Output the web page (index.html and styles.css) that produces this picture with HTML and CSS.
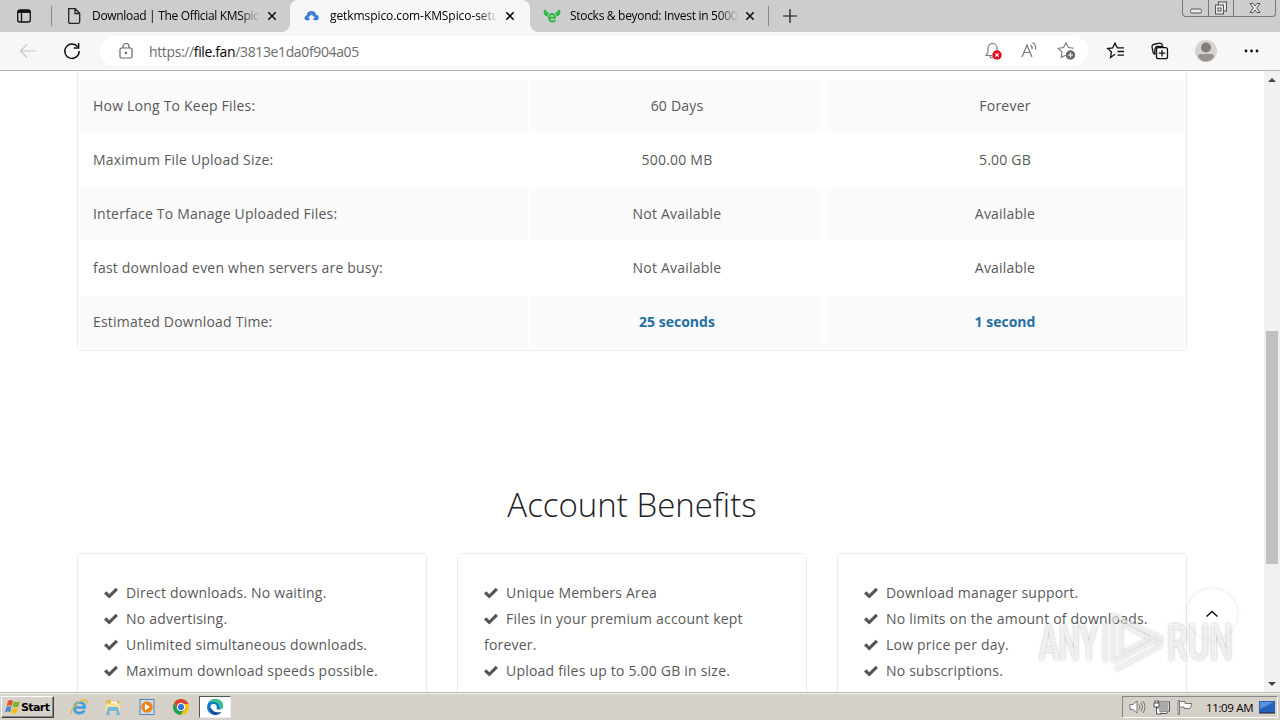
FILE: index.html
```html
<!DOCTYPE html>
<html lang="en">
  <head>
    <meta charset="UTF-8" />
    <meta name="viewport" content="width=device-width, initial-scale=1.0" />
    <title>getkmspico.com-KMSpico-setup</title>
    <link rel="stylesheet" href="styles.css">
  </head>
  <body>
    <div class="tab-bar">
      <div class="tab-actions">
        <svg width="16" height="16" viewBox="0 0 16 16" fill="none" stroke="#111" stroke-width="1.3"><rect x="1.7" y="2" width="12.6" height="12" rx="2"/><path d="M2 4h12M5.5 5v9" /><path d="M2 3.4h12" stroke-width="2.6"/></svg>
      </div>
      <div class="tab">
        <svg class="favicon" width="18" height="18" viewBox="0 0 18 18" fill="none" stroke="#222" stroke-width="1.3"><path d="M3.7 1.7h6.5l4.5 4.5v8.6q0 1.5-1.5 1.5H5.2q-1.5 0-1.5-1.5zM10 2v4.5h4.5"/></svg>
        <span class="tab-title title-download">Download | The Official KMSpic</span>
        <svg class="close" width="10" height="10" viewBox="0 0 10 10"><path d="M1.3 1.3l7.4 7.4M8.7 1.3L1.3 8.7"/></svg>
      </div>
      <div class="tab active">
        <svg class="favicon" width="18" height="18" viewBox="0 0 18 18"><path fill="#3e7fd6" d="M6.500 13.300H3.700C2 13.300 1.500 12 1.500 11Q1.500 8.800 3.700 8.300Q4.200 4 8.500 4Q12.300 4 13 7.700Q15.700 8 15.700 10.800Q15.700 13.300 13.200 13.300H10.500V11h1.700L8.500 7.500 4.800 11h1.700z"/></svg>
        <span class="tab-title title-file">getkmspico.com-KMSpico-setu</span>
        <svg class="close" width="10" height="10" viewBox="0 0 10 10"><path d="M1.3 1.3l7.4 7.4M8.7 1.3L1.3 8.7"/></svg>
      </div>
      <div class="tab">
        <svg class="favicon" width="18" height="18" viewBox="0 0 18 18"><path fill="#2fb845" d="M2.500 2Q2 4.500 5.500 5.500L4.500 9.500Q-.5 8 1 3.500zM15.500 2Q16 4.500 12.500 5.500L13.500 9.500Q18.500 8 17 3.500z"/><path fill="none" stroke="#2fb845" stroke-width="2" d="M6 10.800h6Q12 7 9 7T6 11Q6.200 14.500 9.300 14.500 11.200 14.500 12.300 13.300"/></svg>
        <span class="tab-title title-stocks">Stocks &amp; beyond: Invest in 5000</span>
        <svg class="close" width="10" height="10" viewBox="0 0 10 10"><path d="M1.3 1.3l7.4 7.4M8.7 1.3L1.3 8.7"/></svg>
      </div>
      <div class="new-tab">
        <svg width="14" height="14" viewBox="0 0 14 14"><path d="M0 7h14M7 0v14" stroke="#111" stroke-width="1.2"/></svg>
      </div>
      <div class="window-buttons">
        <span class="win-button"><svg width="14" height="14" viewBox="0 0 14 14"><rect x="1.5" y="8" width="11" height="4" rx="1.5"/></svg></span>
        <span class="win-button"><svg width="14" height="14" viewBox="0 0 14 14"><rect x="4.5" y="1" width="8" height="9"/><rect x="1.5" y="4" width="8" height="9"/><rect x="4" y="7" width="3" height="3"/></svg></span>
        <span class="win-button wide"><svg width="14" height="14" viewBox="0 0 14 14"><path d="M2 2.500h3l2 2.500 2-2.500h3L8.700 7l3.300 4.500H9L7 9l-2 2.500H2L5.300 7z"/></svg></span>
      </div>
    </div>

    <div class="toolbar">
      <svg class="back" width="18" height="16" viewBox="0 0 18 16"><path d="M17 8H2M8 1.500L1.500 8 8 14.500" fill="none" stroke="#c9c9c9" stroke-width="1.2"/></svg>
      <svg class="reload" width="18" height="18" viewBox="0 0 18 18" fill="none" stroke="#111" stroke-width="1.4"><path d="M14.700 4.800A7.200 7.200 0 1 0 16.200 9M15.700 1v5h-5"/></svg>
      <div class="address">
        <svg class="lock" width="16" height="18" viewBox="0 0 16 18" fill="none" stroke="#666" stroke-width="1.2"><rect x="2" y="6" width="12" height="10" rx="1.5"/><path d="M5 6V4.500a3 3 0 0 1 6 0V6"/><circle cx="8" cy="11" r=".6" fill="#666"/></svg>
        <span class="url">https://<b>file.fan</b>/3813e1da0f904a05</span>
        <div class="address-icons">
          <svg width="20" height="20" viewBox="0 0 20 20"><path d="M9 14.500H3L5 11V7a4.500 4.500 0 0 1 9 0v3M7 15q1 3 3 1" fill="none" stroke="#777" stroke-width="1.1"/><circle cx="14" cy="14" r="4.700" fill="#e00b1c"/><path d="M12.300 12.300l3.400 3.400M15.700 12.300l-3.400 3.400" stroke="#fff" stroke-width="1.2"/></svg>
          <svg width="20" height="20" viewBox="0 0 20 20" fill="none" stroke="#777" stroke-width="1.2"><path d="M2 16L7 4 12 16M4 11.500h6M10.500 4q2 1.500 1.500 4M12.500 1.500q4 2.500 3 7"/></svg>
          <svg width="20" height="20" viewBox="0 0 20 20"><path d="M8.500 14.200L4.200 16.300 5 11 1.300 7.300l5.200-.8L9 2l2.500 4.500 5.200.8" fill="none" stroke="#777" stroke-width="1.1"/><circle cx="13.500" cy="14" r="4.700" fill="#666"/><path d="M13.500 11.500v5M11 14h5" stroke="#fff"/></svg>
        </div>
      </div>
      <div class="toolbar-icons">
        <svg width="20" height="20" viewBox="0 0 20 20" fill="none" stroke="#111" stroke-width="1.3"><path d="M9 13.300L4.500 16.500l1-5.500-3.800-3.500 5-.7L9 2.200l2.300 4.600H18M11.500 10.500H18M11.500 14.200H18"/></svg>
        <svg width="20" height="20" viewBox="0 0 20 20" fill="none" stroke="#111" stroke-width="1.3"><path d="M5 13.500Q3.300 13 3 11L2 6Q1.700 4 3.500 3.500L9.500 2.200Q12 2 12.500 4.300M5 13.500Q4 5.500 7.500 5.500h6"/><rect x="6.500" y="6.700" width="11" height="11" rx="2" fill="#f7f7f7"/><path d="M12 9v6.500M8.800 12.200h6.500"/></svg>
        <svg class="avatar" width="22" height="22" viewBox="0 0 22 22"><circle cx="11" cy="11" r="11" fill="#d5d2cf"/><circle cx="11" cy="7.500" r="5" fill="#827d79"/><path d="M3 16.500q0-2.500 3-2.500h10q3 0 3 2.500-2.500 5-8 5t-8-5z" fill="#98938f"/></svg>
        <svg width="20" height="20" viewBox="0 0 20 20" fill="#111"><circle cx="5" cy="10" r="1.400"/><circle cx="10.500" cy="10" r="1.400"/><circle cx="16" cy="10" r="1.400"/></svg>
      </div>
    </div>

    <div class="viewport">
      <div class="page">
        <div class="compare">
          <table>
            <tr><td>How Long To Keep Files:</td><td>60 Days</td><td>Forever</td></tr>
            <tr><td>Maximum File Upload Size:</td><td>500.00 MB</td><td>5.00 GB</td></tr>
            <tr><td>Interface To Manage Uploaded Files:</td><td>Not Available</td><td>Available</td></tr>
            <tr><td>fast download even when servers are busy:</td><td>Not Available</td><td>Available</td></tr>
            <tr><td>Estimated Download Time:</td><td><strong>25 seconds</strong></td><td><strong>1 second</strong></td></tr>
          </table>
        </div>

        <h2>Account Benefits</h2>

        <div class="benefits">
          <ul class="card">
            <li><svg class="check" viewBox="0 0 14 12"><path d="M0 6.500L2.300 4.200 5.300 7.200 11.700.8 14 3.100 5.300 11.600z"/></svg>Direct downloads. No waiting.</li>
            <li><svg class="check" viewBox="0 0 14 12"><path d="M0 6.500L2.300 4.200 5.300 7.200 11.700.8 14 3.100 5.300 11.600z"/></svg>No advertising.</li>
            <li><svg class="check" viewBox="0 0 14 12"><path d="M0 6.500L2.300 4.200 5.300 7.200 11.700.8 14 3.100 5.300 11.600z"/></svg>Unlimited simultaneous downloads.</li>
            <li><svg class="check" viewBox="0 0 14 12"><path d="M0 6.500L2.300 4.200 5.300 7.200 11.700.8 14 3.100 5.300 11.600z"/></svg>Maximum download speeds possible.</li>
          </ul>
          <ul class="card">
            <li><svg class="check" viewBox="0 0 14 12"><path d="M0 6.500L2.300 4.200 5.300 7.200 11.700.8 14 3.100 5.300 11.600z"/></svg>Unique Members Area</li>
            <li><svg class="check" viewBox="0 0 14 12"><path d="M0 6.500L2.300 4.200 5.300 7.200 11.700.8 14 3.100 5.300 11.600z"/></svg>Files in your premium account kept forever.</li>
            <li><svg class="check" viewBox="0 0 14 12"><path d="M0 6.500L2.300 4.200 5.300 7.200 11.700.8 14 3.100 5.300 11.600z"/></svg>Upload files up to 5.00 GB in size.</li>
          </ul>
          <ul class="card">
            <li><svg class="check" viewBox="0 0 14 12"><path d="M0 6.500L2.300 4.200 5.300 7.200 11.700.8 14 3.100 5.300 11.600z"/></svg>Download manager support.</li>
            <li><svg class="check" viewBox="0 0 14 12"><path d="M0 6.500L2.300 4.200 5.300 7.200 11.700.8 14 3.100 5.300 11.600z"/></svg>No limits on the amount of downloads.</li>
            <li><svg class="check" viewBox="0 0 14 12"><path d="M0 6.500L2.300 4.200 5.300 7.200 11.700.8 14 3.100 5.300 11.600z"/></svg>Low price per day.</li>
            <li><svg class="check" viewBox="0 0 14 12"><path d="M0 6.500L2.300 4.200 5.300 7.200 11.700.8 14 3.100 5.300 11.600z"/></svg>No subscriptions.</li>
          </ul>
        </div>

        <div class="to-top"><svg width="14" height="8" viewBox="0 0 14 8"><path d="M1.500 6.500L7 1.500l5.500 5" fill="none" stroke="#111" stroke-width="1.5"/></svg></div>
      </div>
      <div class="scrollbar">
        <span class="arrow up"></span>
        <span class="thumb"></span>
        <span class="arrow down"></span>
      </div>
    </div>

    <svg class="watermark" width="210" height="76" viewBox="0 0 210 76">
      <g fill="#fff" fill-opacity=".7">
        <text x="8" y="54" textLength="59" lengthAdjust="spacingAndGlyphs">ANY</text>
        <text x="136" y="54" textLength="66" lengthAdjust="spacingAndGlyphs">RUN</text>
      </g>
      <path d="M74 17v39M82 55V9l49 24-4 4L90 17v31l37-20M82 56l46-24M84 64l47-25" fill="none" stroke="#fff" stroke-opacity=".6" stroke-width="3.5" stroke-linejoin="round"/>
    </svg>

    <div class="taskbar">
      <div class="start">
        <svg width="17" height="16" viewBox="0 0 17 16"><path fill="#e3532b" d="M4 2q3-2 5 0L7.700 7q-2-1.500-5 0z"/><path fill="#77b52c" d="M10 2.500q3 1.500 6 0L14.500 7.500q-3 1.500-6 0z"/><path fill="#438bd3" d="M2.400 8q3-1.500 5 0L6 13.200q-2-1.500-5 0z"/><path fill="#f6bd22" d="M8.200 8.700q3 1.500 6 0L12.700 14q-3 1.500-6 0z"/></svg>
        <span>Start</span>
      </div>
      <div class="launch">
        <svg width="18" height="18" viewBox="0 0 18 18" fill="none"><path d="M4.500 9.500h10Q14.500 4.500 9.500 4.500T4.500 10T10 15Q13 15 14.300 12.500" stroke="#3ba0df" stroke-width="2.7"/><path d="M2 16Q-.5 13 6 6.500T16.500 2.500Q17.500 4 16 6.500" stroke="#e8b832" stroke-width="1.2"/></svg>
        <svg width="18" height="18" viewBox="0 0 18 18"><path fill="#e4b94e" d="M2 2h5l1 1h8v10H2z"/><path fill="#f8e29a" d="M2 5.500h14v8H2z"/><path fill="#fff" d="M7 3.500h6v2H7z"/><path fill="#6db8dc" d="M4 9h10l2 8h-3.500v-4h-7v4H2z"/></svg>
        <svg width="18" height="18" viewBox="0 0 18 18"><rect x="2" y="1.500" width="14" height="15" fill="#c9def0" stroke="#5682ad"/><circle cx="9" cy="9" r="5.800" fill="#f28419"/><path d="M7 5.800v6.400L12 9z" fill="#fff"/></svg>
        <svg width="18" height="18" viewBox="0 0 18 18"><circle cx="9" cy="9" r="8" fill="#f4c20d"/><path fill="#db4437" d="M2 5a8 8 0 0 1 14.400 1H9L5.500 11z"/><path fill="#20a05a" d="M2 5a8 8 0 0 0 6.500 12l4-6-6.500 1z"/><circle cx="9" cy="9" r="4" fill="#fff"/><circle cx="9" cy="9" r="3.100" fill="#3474df"/></svg>
        <div class="running"><svg width="18" height="18" viewBox="0 0 18 18"><path fill="#1676c9" d="M1 8.500Q2 1 9.500 1 17 1.500 17 8q0 3.500-4 3.500-3 0-2.300-1.500Q11 6 7.500 6t-3 4q.5 6 9.500 4.500Q11.500 17 8.500 17 1 16 1 8.500z"/><path fill="#3ac38a" d="M4 3Q7 .5 11 1.200 17 2.500 17 8q0 3-3.500 3.500Q14 5 9 4 6 3.300 3 5z"/><path fill="#144a96" d="M4.500 9Q2.500 16 10 17q4-.5 5.500-3Q7 16 4.500 9z"/></svg></div>
      </div>
      <div class="tray">
        <svg width="18" height="18" viewBox="0 0 18 18" fill="#fff" stroke="#777"><path d="M2 6.500h3L9 3v12l-4-3.500H2z"/><path fill="none" d="M11 6.500q1.800 2.500 0 5M13 4.500q3 4.500 0 9M15 3q4 6 0 12"/></svg>
        <svg width="18" height="18" viewBox="0 0 18 18" stroke="#555"><rect x="6" y="4.500" width="11" height="8" fill="#aaa" stroke="#fff"/><rect x="5.500" y="4" width="12" height="9" fill="none"/><path fill="#fff" d="M2 5h5v4H2zM3 2v3M6 2v3M4.500 9v7H9M8 15.500h7v-2"/></svg>
        <svg width="18" height="18" viewBox="0 0 18 18" fill="#fff" stroke="#777"><path d="M2 2.500h1.500v14H2z"/><path d="M3.500 3.500H9v2h7l-2 5H8V9H3.500z"/></svg>
        <span class="clock">11:09 AM</span>
        <svg class="desktop" width="16" height="14" viewBox="0 0 16 14"><rect width="16" height="12" y="1" fill="#2462ba"/><path fill="#5c92da" d="M1 2h14L1 9z"/><path d="M0 13h16" stroke="#222"/></svg>
      </div>
    </div>
  </body>
</html>
```

FILE: styles.css
```css
* {
  box-sizing: border-box;
}

body {
  margin: 0;
  width: 1280px;
  height: 720px;
  overflow: hidden;
  display: flex;
  flex-direction: column;
  position: relative;
  font-family: "Open Sans", sans-serif;
  background: #fff;
}

svg {
  flex: none;
  display: block;
}

/* tabs */
.tab-bar {
  height: 32px;
  flex: none;
  display: flex;
  align-items: flex-start;
  background: #cdcdcd;
}

.tab-actions {
  width: 52px;
  height: 20px;
  margin-top: 6px;
  padding: 2px 0 0 16px;
  border-right: 1px solid #888;
}

.tab {
  position: relative;
  width: 238px;
  height: 32px;
  padding: 0 13px;
  display: flex;
  align-items: center;
}

.tab.active {
  width: 240px;
  background: #f7f7f7;
  border-radius: 8px 8px 0 0;
}

.tab.active::before,
.tab.active::after {
  content: "";
  position: absolute;
  bottom: 0;
  width: 8px;
  height: 8px;
}

.tab.active::before {
  left: -8px;
  background: radial-gradient(circle at 0 0, #cdcdcd 7.5px, #f7f7f7 8px);
}

.tab.active::after {
  right: -8px;
  background: radial-gradient(circle at 100% 0, #cdcdcd 7.5px, #f7f7f7 8px);
}

.tab-title {
  width: 168px;
  margin-left: 9px;
  white-space: nowrap;
  font-size: 12px;
  line-height: 18px;
  color: #000;
  -webkit-mask-image: linear-gradient(to right, #000 148px, transparent 168px);
  mask-image: linear-gradient(to right, #000 148px, transparent 168px);
}

.title-download {
  letter-spacing: -0.32px;
}

.title-file {
  letter-spacing: -0.08px;
}

.title-stocks {
  letter-spacing: -0.3px;
}

.close {
  margin-left: 7px;
  fill: none;
  stroke: #111;
  stroke-width: 1.6;
}

.new-tab {
  height: 20px;
  margin-top: 6px;
  padding: 3px 0 0 14px;
  border-left: 1px solid #888;
}

.window-buttons {
  margin: 0 4px 0 auto;
  display: flex;
  height: 17px;
  border: 1px solid #777;
  border-top: 0;
  border-radius: 0 0 4px 4px;
}

.win-button {
  width: 25px;
  display: flex;
  justify-content: center;
  align-items: center;
  fill: #e9e9e9;
  stroke: #555;
}

.win-button + .win-button {
  border-left: 1px solid #777;
}

.win-button.wide {
  width: 42px;
}

/* toolbar */
.toolbar {
  height: 39px;
  flex: none;
  display: flex;
  align-items: center;
  background: #f7f7f7;
  border-bottom: 1px solid #b5b5b5;
}

.back {
  margin-left: 19px;
}

.reload {
  margin-left: 26px;
}

.address {
  width: 988px;
  height: 30px;
  margin-left: 19px;
  padding: 0 11px 0 18px;
  display: flex;
  align-items: center;
  background: #fff;
  border-radius: 15px;
}

.url {
  margin-left: 15px;
  font-size: 14px;
  letter-spacing: -0.37px;
  color: #6c6c6c;
}

.url b {
  font-weight: 400;
  color: #000;
}

.address-icons {
  margin-left: auto;
  display: flex;
  gap: 17px;
}

.toolbar-icons {
  margin-left: 18px;
  display: flex;
  align-items: center;
  gap: 24px;
}

.avatar {
  margin-left: 1px;
}

/* page */
.viewport {
  height: 621px;
  flex: none;
  display: flex;
}

.page {
  position: relative;
  width: 1264px;
  padding: 0 77px;
  overflow: hidden;
  font-size: 14px;
  letter-spacing: 0.21px;
  color: #595959;
}

.compare {
  height: 280px;
  padding: 7px 0 0;
  border: 1px solid #ececec;
  border-top: 0;
  border-radius: 0 0 5px 5px;
}

table {
  width: 1108px;
  table-layout: fixed;
  border-spacing: 2px;
}

td {
  height: 52px;
  padding: 0 13px 2px 14px;
  text-align: center;
}

td:first-child {
  width: 448px;
  padding-left: 13px;
  text-align: left;
}

td:nth-child(2) {
  width: 293px;
}

tr:nth-child(odd) td {
  background: #fafafa;
}

td strong {
  letter-spacing: 0;
  color: #246fa1;
}

h2 {
  margin: 130px 0 0;
  text-align: center;
  font-size: 33px;
  line-height: 48px;
  font-weight: 300;
  letter-spacing: 0;
  color: #222;
}

.benefits {
  margin-top: 24px;
  display: grid;
  grid-template-columns: repeat(3, 350px);
  gap: 30px;
}

.card {
  height: 180px;
  margin: 0;
  padding: 26px;
  list-style: none;
  line-height: 26px;
  border: 1px solid #ebebeb;
  border-radius: 5px;
}

.check {
  display: inline-block;
  width: 14px;
  height: 12px;
  margin-right: 8px;
  vertical-align: -1px;
  fill: #555;
}

.to-top {
  position: absolute;
  right: 27px;
  top: 518px;
  width: 50px;
  height: 50px;
  display: flex;
  align-items: center;
  justify-content: center;
  background: #fff;
  border-radius: 50%;
  box-shadow: 0 0 5px rgba(0, 0, 0, 0.1);
}

.scrollbar {
  width: 16px;
  padding: 7px 0 6px;
  display: flex;
  flex-direction: column;
  align-items: center;
  background: #f1f1f1;
}

.arrow {
  border: 4px solid transparent;
}

.arrow.up {
  border-top: 0;
  border-bottom-color: #444;
}

.arrow.down {
  margin-top: auto;
  border-bottom: 0;
  border-top-color: #444;
}

.thumb {
  width: 12px;
  height: 233px;
  margin-top: 249px;
  background: #c1c1c1;
}

.watermark {
  position: absolute;
  left: 1031px;
  top: 606px;
  font-family: Roboto, sans-serif;
  font-size: 50px;
  font-weight: 500;
  filter: drop-shadow(0 0 1.5px rgba(0, 0, 0, 0.38));
}

/* taskbar */
.taskbar {
  height: 28px;
  flex: none;
  padding: 1px 2px 0 1px;
  display: flex;
  align-items: center;
  background: #d5d0c8;
  border-top: 1px solid #bdb9b2;
  box-shadow: inset 0 1px #f5f3ef;
}

.start {
  width: 53px;
  height: 22px;
  padding-left: 2px;
  display: flex;
  align-items: center;
  border: 1px solid;
  border-color: #fff #404040 #404040 #fff;
  box-shadow: inset -1px -1px #888;
}

.start span {
  font: bold 11px "DejaVu Sans", sans-serif;
  letter-spacing: -0.6px;
  color: #000;
}

.launch {
  margin-left: 16px;
  display: flex;
  align-items: center;
  gap: 16px;
}

.running {
  width: 32px;
  height: 22px;
  margin-left: -7px;
  padding: 1px 0 0 6px;
  background: #fff;
  border: 1px solid;
  border-color: #555 #eee #eee #555;
}

.tray {
  width: 156px;
  height: 22px;
  margin-left: auto;
  padding: 0 2px 0 5px;
  display: flex;
  align-items: center;
  gap: 6px;
  border: 1px solid;
  border-color: #888 #fff #fff #888;
}

.clock {
  margin-left: 6px;
  font-size: 11.5px;
  letter-spacing: -0.35px;
  white-space: nowrap;
  color: #000;
}

.desktop {
  margin-left: auto;
}
```
